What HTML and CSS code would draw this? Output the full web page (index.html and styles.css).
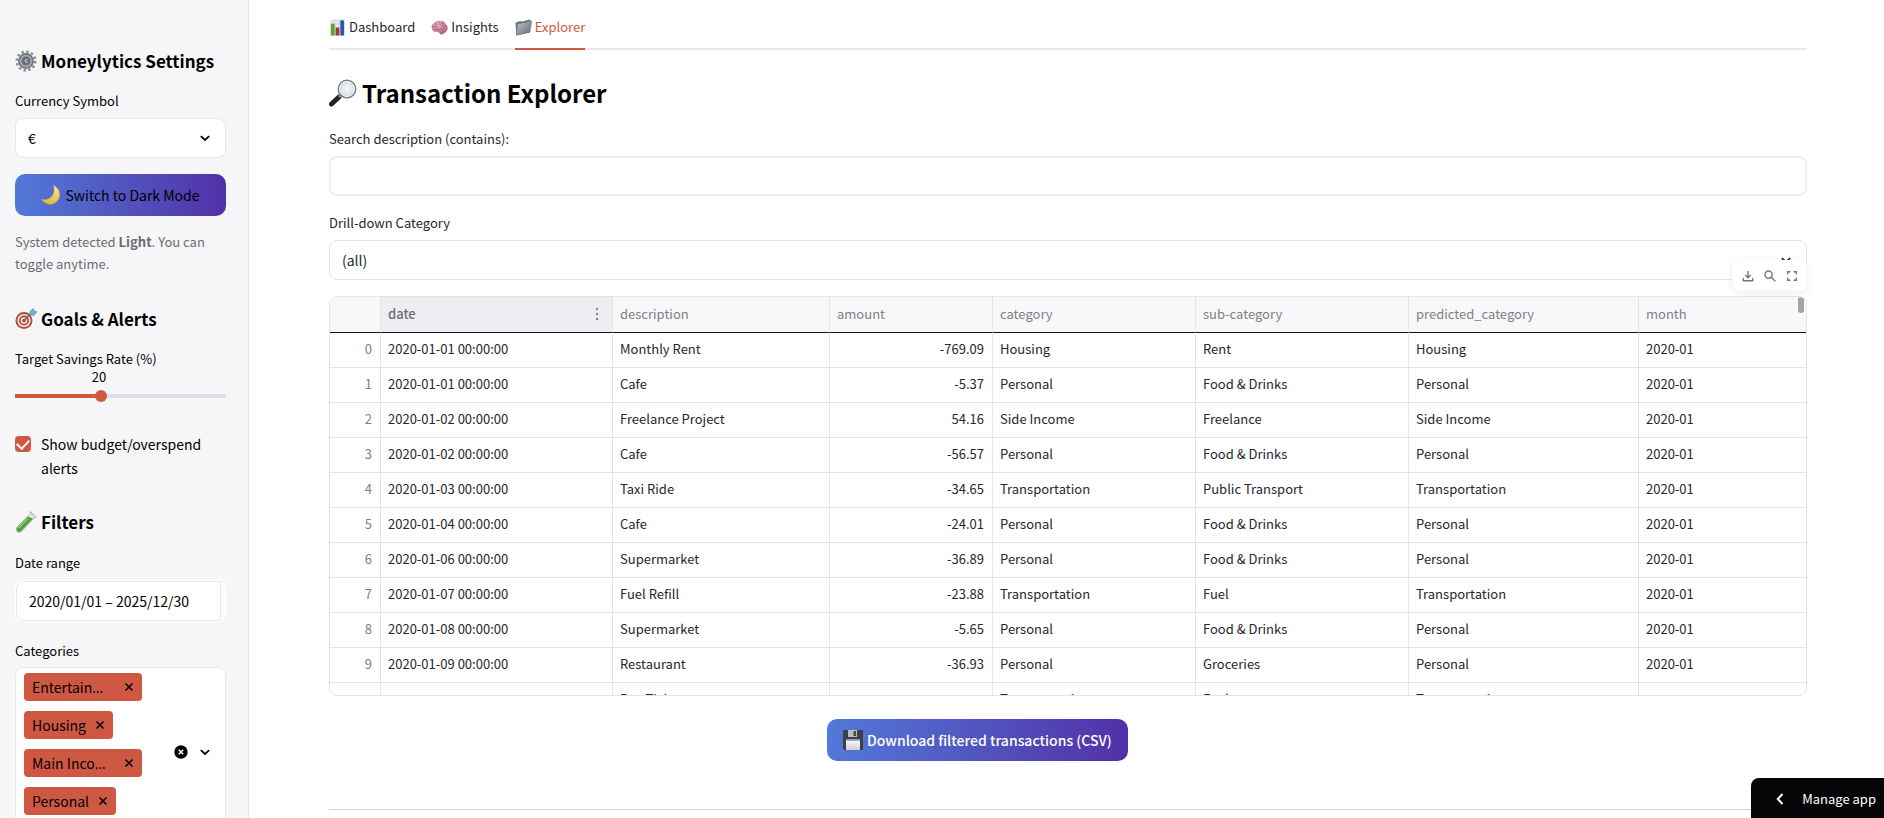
FILE: index.html
```html
<!DOCTYPE html>
<html lang="en">
<head>
<meta charset="utf-8">
<title>Moneylytics</title>
<link rel="stylesheet" href="styles.css">
</head>
<body>
<svg class="defs" width="0" height="0" aria-hidden="true">
  <defs>
    <linearGradient id="steel" x1="0" y1="0" x2="1" y2="1"><stop offset="0" stop-color="#c3c8cf"/><stop offset="1" stop-color="#5b6470"/></linearGradient>
    <linearGradient id="gold" x1="0" y1="0" x2="0" y2="1"><stop offset="0" stop-color="#fbe9a0"/><stop offset="1" stop-color="#e3b73f"/></linearGradient>
    <linearGradient id="green" x1="0" y1="0" x2="1" y2="1"><stop offset="0" stop-color="#7fce55"/><stop offset="1" stop-color="#2b7d22"/></linearGradient>
    <linearGradient id="paper" x1="0" y1="0" x2="0" y2="1"><stop offset="0" stop-color="#fff"/><stop offset="1" stop-color="#cfcfcf"/></linearGradient>
    <radialGradient id="glass"><stop offset="0" stop-color="#f7f8fa"/><stop offset="1" stop-color="#d5d9e2"/></radialGradient>
    <radialGradient id="brain" cx=".4" cy=".3" r=".8"><stop offset="0" stop-color="#eeb7c4"/><stop offset="1" stop-color="#a95c72"/></radialGradient>
    <symbol id="chevron" viewBox="0 0 12 12"><path d="M1.800 4.200 6 8l4.200-3.800" fill="none" stroke="currentColor" stroke-width="1.800"/></symbol>
    <symbol id="cross" viewBox="0 0 10 10"><path d="M1.500 1.500 8.500 8.500M8.500 1.500 1.500 8.500" stroke="currentColor" stroke-width="1.500"/></symbol>
  </defs>
</svg>
<div class="app">
  <aside class="sidebar">
    <h3 class="side-title first">
      <svg class="emoji" viewBox="0 0 22 22"><circle cx="11" cy="11" r="9.300" fill="none" stroke="#858b93" stroke-width="2.400" stroke-dasharray="2.400 2.470"/><circle cx="11" cy="11" r="7.200" fill="#a4a8ae" stroke="#6b7078" stroke-width="1.500"/><circle cx="11" cy="11" r="4.600" fill="#6c7480"/><circle cx="11.500" cy="11" r="2.600" fill="#c6cbd2" stroke="#50565e"/><circle cx="12" cy="11" r="1" fill="#555c66"/></svg>
      Moneylytics Settings</h3>
    <label class="label" for="currency">Currency Symbol</label>
    <div class="select-box">
      <select id="currency"><option>€</option></select>
      <svg class="chev"><use href="#chevron"/></svg>
    </div>
    <button class="btn side-btn" type="button">
      <svg class="emoji-sm" viewBox="0 0 20 20"><path d="M12.500.5a9.700 9.700 0 1 1-12 13.600C8 17 15.500 9.500 12.500.500z" fill="url(#gold)" stroke="#c59c35" stroke-width=".5"/></svg>
      Switch to Dark Mode</button>
    <p class="caption">System detected <b>Light</b>. You can toggle anytime.</p>
    <h3 class="side-title goals">
      <svg class="emoji" viewBox="0 0 22 22"><circle cx="9" cy="12.500" r="8.500" fill="#b34d3a"/><circle cx="9" cy="12.500" r="6.600" fill="#eee5dc"/><circle cx="9" cy="12.500" r="5" fill="#b74838"/><circle cx="9" cy="12.500" r="3.300" fill="#f1e7df"/><circle cx="9" cy="12.500" r="1.700" fill="#b33c30"/><path d="M9 12.500 16 5.500" stroke="#4c6673" stroke-width="1.200"/><path d="m14.500 7 .5-4 3.500-2.500.5 2.500 3 .5-3 4z" fill="#75b5ca" stroke="#42849c" stroke-width=".5"/></svg>
      Goals &amp; Alerts</h3>
    <label class="label" for="rate">Target Savings Rate (%)</label>
    <div class="slider">
      <output for="rate">20</output>
      <input id="rate" type="range" min="0" max="50" value="20">
    </div>
    <label class="check"><input type="checkbox" checked><span>Show budget/overspend alerts</span></label>
    <h3 class="side-title filters">
      <svg class="emoji" viewBox="0 0 22 22"><path d="M16.500 1.500 20.500 5.500 6.500 20.500Q4 22.500 2 20.500T2 16z" fill="#e4ebe6" stroke="#99a49c" stroke-width=".7"/><path d="m13 5.500 5 2L6.200 20Q4 22 2.300 20.300T2.500 16.500z" fill="url(#green)"/><path d="m15 1 6 5.500" stroke="#c1c9c4" stroke-width="1.700" stroke-linecap="round"/><path d="M4 17 12.500 8" stroke="#b5e59a" stroke-width=".9"/></svg>
      Filters</h3>
    <label class="label" for="range">Date range</label>
    <div class="date-box"><input id="range" type="text" value="2020/01/01 – 2025/12/30"></div>
    <div class="label" id="cats">Categories</div>
    <div class="multi" role="group" aria-labelledby="cats">
      <div class="tags">
        <span class="tag long"><span>Entertain<span class="ellipsis">…</span></span><button type="button" aria-label="Remove Entertainment"><svg><use href="#cross"/></svg></button></span>
        <span class="tag"><span>Housing</span><button type="button" aria-label="Remove Housing"><svg><use href="#cross"/></svg></button></span>
        <span class="tag long"><span>Main Inco<span class="ellipsis">…</span></span><button type="button" aria-label="Remove Main Income"><svg><use href="#cross"/></svg></button></span>
        <span class="tag"><span>Personal</span><button type="button" aria-label="Remove Personal"><svg><use href="#cross"/></svg></button></span>
      </div>
      <div class="multi-actions">
        <button type="button" aria-label="Clear all"><svg class="clear" viewBox="0 0 14 14"><circle cx="7" cy="7" r="6.700"/><path d="m4.800 4.800 4.400 4.400m0-4.400L4.800 9.200" stroke="#fff" stroke-width="1.600"/></svg></button>
        <button type="button" aria-label="Open"><svg class="chev-in"><use href="#chevron"/></svg></button>
      </div>
    </div>
  </aside>

  <main class="main">
    <nav class="tabs">
      <a href="#dashboard"><svg class="emoji-tab" viewBox="0 0 16 18"><path d="M.5.500h15v17H.500z" fill="#dfe6ee"/><path d="M0 5h16M0 9h16M0 13h16M5 0v18M10 0v18" stroke="#c5d2df" stroke-width=".5"/><path d="M1 5h4v12.500H1z" fill="#57a639"/><path d="M6 9h4v8.500H6z" fill="#a63a2e"/><path d="M11 1.500h4v16h-4z" fill="#3450b5"/></svg>Dashboard</a>
      <a href="#insights"><svg class="emoji-tab" viewBox="0 0 18 16"><path d="M1 9Q-.5 5 3 3.500 6 0 10 1.200q4-.5 5.500 3Q19 7 17 11q-1 3-3.500 3-1.500 2.500-4 .5Q8 12.500 6 12.500 1.500 13 1 9z" fill="url(#brain)"/><path d="M2 8q3-3 5 0m-3-4q2 0 3 1.500M8 2.500q3 1 1.500 3.500m3-4Q14 5 11 7m-3 4q2-3 5-1m3-4q-3 0-3 3m-9 1q3 1 4-1m3 4q2 0 3-2" fill="none" stroke="#8d4a60" stroke-width=".8"/></svg>Insights</a>
      <a class="active" href="#explorer"><svg class="emoji-tab" viewBox="0 0 18 17"><path d="m.5 3.500 5-2L7 2.500 15.500 0l1.500 2-2 12L1.500 16.800z" fill="#67717b"/><path d="m2.800 4.800 15-3.300-2 12L1.500 16.800z" fill="url(#steel)" stroke="#707982" stroke-width=".5"/></svg>Explorer</a>
    </nav>
    <h2 class="title">
      <svg class="emoji-lg" viewBox="0 0 28 28"><path d="M2.500 25 10 18" stroke="#202226" stroke-width="5" stroke-linecap="round"/><path d="m10 18 3-3" stroke="#8e939c" stroke-width="2.500"/><circle cx="18" cy="10" r="8.700" fill="url(#glass)" stroke="#777d88" stroke-width="1.500"/><circle cx="18" cy="10" r="7.500" fill="none" stroke="#fff" stroke-width=".8"/></svg>
      Transaction Explorer</h2>
    <label class="label" for="search">Search description (contains):</label>
    <input class="search" id="search" type="text">
    <label class="label" for="drill">Drill-down Category</label>
    <div class="select-box">
      <select id="drill"><option>(all)</option></select>
      <svg class="chev"><use href="#chevron"/></svg>
    </div>

    <div class="frame">
      <div class="toolbar">
        <button type="button" aria-label="Download"><svg viewBox="0 0 12 12"><path d="M6 1v6.500M3.200 5 6 7.800 8.800 5M1.300 8v2.700h9.400V8"/></svg></button>
        <button type="button" aria-label="Search"><svg viewBox="0 0 12 12"><circle cx="4.600" cy="4.600" r="3.600"/><path d="m7.300 7.300 4 4"/></svg></button>
        <button type="button" aria-label="Fullscreen"><svg viewBox="0 0 12 12"><path d="M1.700 4.500V1.700h2.800m3 0h2.800v2.800m0 3v2.800H7.500m-3 0H1.700V7.500"/></svg></button>
      </div>
      <div class="grid">
        <table>
          <colgroup><col class="c-idx"><col class="c-date"><col class="c-desc"><col class="c-amt"><col class="c-cat"><col class="c-sub"><col class="c-pred"><col></colgroup>
          <thead><tr><th></th><th class="hot"><span class="th-in">date<svg class="dots" viewBox="0 0 4 14"><circle cx="2" cy="2" r="1.200"/><circle cx="2" cy="7" r="1.200"/><circle cx="2" cy="12" r="1.200"/></svg></span></th><th>description</th><th>amount</th><th>category</th><th>sub-category</th><th>predicted_category</th><th>month</th></tr></thead>
          <tbody>
            <tr><td>0</td><td>2020-01-01 00:00:00</td><td>Monthly Rent</td><td>-769.09</td><td>Housing</td><td>Rent</td><td>Housing</td><td>2020-01</td></tr>
            <tr><td>1</td><td>2020-01-01 00:00:00</td><td>Cafe</td><td>-5.37</td><td>Personal</td><td>Food &amp; Drinks</td><td>Personal</td><td>2020-01</td></tr>
            <tr><td>2</td><td>2020-01-02 00:00:00</td><td>Freelance Project</td><td>54.16</td><td>Side Income</td><td>Freelance</td><td>Side Income</td><td>2020-01</td></tr>
            <tr><td>3</td><td>2020-01-02 00:00:00</td><td>Cafe</td><td>-56.57</td><td>Personal</td><td>Food &amp; Drinks</td><td>Personal</td><td>2020-01</td></tr>
            <tr><td>4</td><td>2020-01-03 00:00:00</td><td>Taxi Ride</td><td>-34.65</td><td>Transportation</td><td>Public Transport</td><td>Transportation</td><td>2020-01</td></tr>
            <tr><td>5</td><td>2020-01-04 00:00:00</td><td>Cafe</td><td>-24.01</td><td>Personal</td><td>Food &amp; Drinks</td><td>Personal</td><td>2020-01</td></tr>
            <tr><td>6</td><td>2020-01-06 00:00:00</td><td>Supermarket</td><td>-36.89</td><td>Personal</td><td>Food &amp; Drinks</td><td>Personal</td><td>2020-01</td></tr>
            <tr><td>7</td><td>2020-01-07 00:00:00</td><td>Fuel Refill</td><td>-23.88</td><td>Transportation</td><td>Fuel</td><td>Transportation</td><td>2020-01</td></tr>
            <tr><td>8</td><td>2020-01-08 00:00:00</td><td>Supermarket</td><td>-5.65</td><td>Personal</td><td>Food &amp; Drinks</td><td>Personal</td><td>2020-01</td></tr>
            <tr><td>9</td><td>2020-01-09 00:00:00</td><td>Restaurant</td><td>-36.93</td><td>Personal</td><td>Groceries</td><td>Personal</td><td>2020-01</td></tr>
            <tr><td></td><td></td><td>Bus Ticket</td><td></td><td>Transportation</td><td>Fuel</td><td>Transportation</td><td></td></tr>
          </tbody>
        </table>
        <span class="thumb"></span>
      </div>
    </div>
    <div class="columns">
      <button class="btn download" type="button">
        <svg class="emoji-sm" viewBox="0 0 20 20"><path d="M0 0h20v20H1.500L0 18.500z" fill="#3d3f43"/><path d="M5 0h9v7H5z" fill="#b9bcc0"/><path d="M10.500 1h2.500v5h-2.500z" fill="#45484c"/><path d="M3 9h14v11H3z" fill="url(#paper)"/><path d="M3 9h14v1.800H3z" fill="#7f9ed6"/></svg>
        Download filtered transactions (CSV)</button>
    </div>
    <hr class="rule">
  </main>
  <button class="manage" type="button"><svg viewBox="0 0 8 12"><path d="M6.500 1 1.800 6l4.700 5"/></svg>Manage app</button>
</div>
</body>
</html>
```
FILE: styles.css
```css
* { box-sizing: border-box; }
body, h2, h3, p { margin: 0; }
body {
  font: 400 13px/20px "Noto Sans CJK SC", "Open Sans", sans-serif;
  color: #262730;
  background: #fff;
}
button, input, select { font: inherit; color: inherit; }
button { border: 0; background: none; padding: 0; cursor: pointer; }
svg { display: block; flex: none; }
.defs { position: absolute; }

.app { display: flex; height: 100vh; overflow: hidden; }

/* Sidebar */
.sidebar {
  width: 249px;
  flex: none;
  padding: 47px 22px 0 15px;
  background: #f6f6f9;
  border-right: 1px solid #e6e6ea;
  color: #000;
  overflow: hidden;
}
.side-title {
  display: flex;
  align-items: center;
  gap: 4px;
  font-size: 17px;
  line-height: 28px;
  font-weight: 700;
  white-space: nowrap;
}
.emoji { width: 22px; height: 22px; }
.emoji-sm { width: 20px; height: 20px; }
.label { display: block; line-height: 20px; }
.first + .label { margin-top: 16px; }
.select-box {
  position: relative;
  height: 40px;
  margin-top: 7px;
}
.select-box select {
  width: 100%;
  height: 100%;
  appearance: none;
  padding: 0 12px;
  font-size: 14px;
  border: 1px solid #e6e6ec;
  border-radius: 8px;
  background: #fff;
}
.chev {
  position: absolute;
  right: 15px;
  top: 14px;
  width: 12px;
  height: 12px;
  pointer-events: none;
}
.btn {
  display: flex;
  align-items: center;
  justify-content: center;
  gap: 4px;
  height: 42px;
  border-radius: 10px;
  background: linear-gradient(90deg, #5279d9, #5230a8);
  font-size: 14px;
  white-space: nowrap;
}
.side-btn { width: 100%; margin-top: 16px; }
.caption { margin-top: 15px; line-height: 22px; color: #6b6b6f; }
.goals { margin-top: 30px; }
.goals + .label { margin-top: 16px; }
.slider output { display: block; width: 24px; margin: -2px 0 0 72px; text-align: center; line-height: 20px; }
.slider input {
  appearance: none;
  display: block;
  width: 100%;
  height: 12px;
  margin: 3px 0 0;
  background: linear-gradient(90deg, #cf5842 40%, #dddfe9 40%) center / 100% 4px no-repeat;
  border-radius: 2px;
}
.slider input::-webkit-slider-thumb {
  appearance: none;
  width: 12px;
  height: 12px;
  border-radius: 50%;
  background: #cf5842;
}
.check {
  display: flex;
  gap: 10px;
  margin-top: 30px;
  font-size: 14px;
  line-height: 24px;
}
.check input {
  appearance: none;
  flex: none;
  width: 16px;
  height: 16px;
  margin: 4px 0 0;
  border-radius: 4px;
  background: #cf5842;
  display: grid;
  place-items: center;
}
.check input::after {
  content: "";
  width: 10px;
  height: 6px;
  border: solid #fff;
  border-width: 0 0 2px 2px;
  transform: translateY(-1px) rotate(-47deg);
}
.filters { margin-top: 28px; }
.filters + .label { margin-top: 17px; }
.date-box {
  margin: 7px 0 19px;
  height: 42px;
  padding: 1px 5px 1px 1px;
  border-radius: 8px;
  background: #fff;
}
.date-box input {
  width: 100%;
  height: 100%;
  padding: 0 12px;
  border: 1px solid #e6e6ee;
  border-radius: 8px 0 0 8px;
  background: #fff;
  font-size: 14px;
}
.multi {
  display: flex;
  justify-content: space-between;
  align-items: center;
  height: 170px;
  margin-top: 6px;
  padding: 0 14px 0 8px;
  border: 1px solid #e6e6ec;
  border-radius: 8px;
  background: #fff;
}
.tags { display: grid; gap: 10px; justify-items: start; align-self: start; padding-top: 5px; }
.tag {
  display: flex;
  align-items: center;
  justify-content: space-between;
  gap: 9px;
  height: 28px;
  padding: 0 8px;
  border-radius: 4px;
  background: #cf5842;
  font-size: 14px;
  white-space: nowrap;
}
.long { width: 118px; }
.ellipsis { font-family: "Open Sans", sans-serif; }
.tag svg { width: 10px; height: 10px; }
.multi-actions { display: flex; align-items: center; gap: 11px; }
.clear { width: 14px; height: 14px; }
.chev-in { width: 12px; height: 12px; }

/* Main */
.main { flex: 1; min-width: 0; padding: 0 77px 0 80px; }
.tabs { display: flex; gap: 16px; height: 50px; border-bottom: 2px solid #e8e8ea; }
.tabs a {
  display: flex;
  align-items: center;
  gap: 3px;
  height: 50px;
  padding-top: 6px;
  border-bottom: 2px solid transparent;
  color: inherit;
  text-decoration: none;
}
.tabs .active { color: #cf5842; border-color: #cf5842; }
.emoji-tab { width: 17px; height: 17px; }
.title {
  display: flex;
  align-items: center;
  gap: 5px;
  margin: 25px 0 18px;
  font-size: 24px;
  line-height: 36px;
  color: #000;
}
.emoji-lg { width: 28px; height: 28px; }
.search {
  display: block;
  width: 100%;
  height: 40px;
  margin: 7px 0 17px;
  padding: 0 12px;
  border: 2px solid #eeeef5;
  border-radius: 8px;
  background: #fff;
}
.frame { position: relative; margin-top: 16px; }
.toolbar {
  position: absolute;
  z-index: 1;
  right: 0;
  top: -36px;
  display: flex;
  align-items: center;
  gap: 10px;
  height: 31px;
  padding: 0 9px 0 10px;
  border-radius: 8px;
  background: #fff;
  box-shadow: 0 2px 8px rgba(0, 0, 0, .08);
}
.toolbar svg { width: 12px; height: 12px; fill: none; stroke: #77777d; stroke-width: 1.4; }
.grid {
  position: relative;
  height: 400px;
  overflow: hidden;
  border: 1px solid #e6e6e8;
  border-radius: 8px;
}
table { width: 100%; table-layout: fixed; border-collapse: separate; border-spacing: 0; }
.c-idx { width: 51px; }
.c-date { width: 232px; }
.c-desc { width: 217px; }
.c-amt { width: 163px; }
.c-cat { width: 203px; }
.c-sub { width: 213px; }
.c-pred { width: 230px; }
th, td {
  height: 35px;
  padding: 0 8px 2px 7px;
  text-align: left;
  border-right: 1px solid #e4e4e7;
  border-bottom: 1px solid #e4e4e7;
  white-space: nowrap;
}
th:last-child, td:last-child { border-right: 0; }
th { height: 36px; font-weight: 400; color: #808086; background: #f8f8fa; border-bottom-color: #111118; }
.hot { background: #edeef2; color: #6c6c73; font-weight: 500; }
.th-in { display: flex; align-items: center; justify-content: space-between; }
.dots { width: 4px; height: 14px; margin-right: 5px; fill: #808086; }
td:first-child { text-align: right; color: #808086; }
td:nth-child(4) { text-align: right; }
.thumb {
  position: absolute;
  right: 2px;
  top: 0;
  width: 6px;
  height: 16px;
  border-radius: 3px;
  background: #a3a3a9;
}
.columns { display: grid; grid-template-columns: repeat(3, 1fr); gap: 16px; margin-top: 23px; }
.download { grid-column: 2; justify-self: start; padding: 0 16px; color: #fff; font-weight: 500; }
.rule { margin: 48px 0 0; border: 0; border-top: 1px solid #d3d3d5; }

.manage {
  position: fixed;
  right: 0;
  bottom: 0;
  display: flex;
  align-items: center;
  gap: 18px;
  height: 40px;
  padding: 2px 8px 0 25px;
  border-radius: 8px 0 0 0;
  background: #050507;
  color: #fff;
}
.manage svg { width: 8px; height: 12px; fill: none; stroke: #fff; stroke-width: 2; }
```
